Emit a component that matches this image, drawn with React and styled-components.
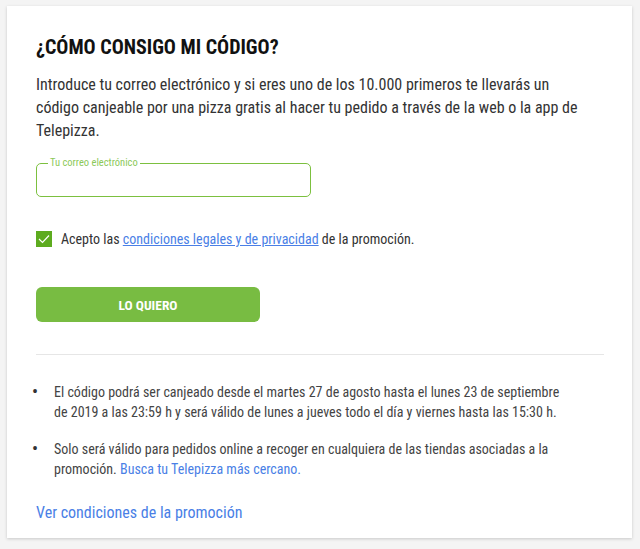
import styled, { createGlobalStyle } from "styled-components"

const Global = createGlobalStyle`
    html, body {
        margin: 0;
        padding: 0;
        background: #f4f4f4;
    }
    body {
        font-family: Roboto, "Liberation Sans", sans-serif;
        font-stretch: 75%;
        color: #333333;
    }
`

export default function App () {
    return (
        <Page>
            <Global />
            <Card>
                <Titulo>¿CÓMO CONSIGO MI CÓDIGO?</Titulo>
                <Intro>
                    Introduce tu correo electrónico y si eres uno de los 10.000 primeros te llevarás un
                    código canjeable por una pizza gratis al hacer tu pedido a través de la web o la app de
                    Telepizza.
                </Intro>
                <Campo>
                    <legend>Tu correo electrónico</legend>
                    <input type="email" />
                </Campo>
                <Acepto>
                    <Check>
                        <svg width="12" height="10" viewBox="0 0 12 10">
                            <path d="M1 5 L4.5 8.5 L11 1.5" fill="none" stroke="#ffffff" strokeWidth="1.2" />
                        </svg>
                    </Check>
                    <span>
                        Acepto las <Enlace href="#" $under>condiciones legales y de privacidad</Enlace> de la promoción.
                    </span>
                </Acepto>
                <Boton>LO QUIERO</Boton>
                <Linea />
                <Lista>
                    <li>
                        El código podrá ser canjeado desde el martes 27 de agosto hasta el lunes 23 de septiembre
                        de 2019 a las 23:59 h y será válido de lunes a jueves todo el día y viernes hasta las 15:30 h.
                    </li>
                    <li>
                        <span>
                            Solo será válido para pedidos online a recoger en cualquiera de las tiendas asociadas a la
                            promoción. <Enlace href="#">Busca tu Telepizza más cercano.</Enlace>
                        </span>
                    </li>
                </Lista>
                <VerCondiciones href="#">Ver condiciones de la promoción</VerCondiciones>
            </Card>
        </Page>
    )
}

const Page = styled.div`
    padding: 6px 8px 6px 7px;
`

const Card = styled.div`
    background: #ffffff;
    box-shadow: 0 1px 3px rgba(0, 0, 0, 0.18);
    padding: 28px 28px 16px 29px;
    display: flex;
    flex-direction: column;
`

const Titulo = styled.h2`
    margin: 0;
    font-size: 20px;
    font-weight: bold;
    color: #111111;
    line-height: 26px;
`

const Intro = styled.p`
    margin: 13px 0 0 0;
    font-size: 16px;
    line-height: 23px;
    color: #333333;
    max-width: 545px;
`

const Campo = styled.fieldset`
    margin: 16px 0 0 0;
    width: 275px;
    height: 39px;
    box-sizing: border-box;
    border: 1px solid #7cc03f;
    border-radius: 5px;
    padding: 0 10px;

    legend {
        font-size: 10.5px;
        color: #8cc95a;
        padding: 0 2px;
        margin-left: 1px;
        line-height: 10px;
    }

    input {
        border: none;
        outline: none;
        width: 100%;
        background: transparent;
    }
`

const Acepto = styled.label`
    margin-top: 34px;
    display: flex;
    align-items: center;
    gap: 9px;
    font-size: 14px;
    color: #333333;
`

const Check = styled.span`
    width: 16px;
    height: 16px;
    background: #5dab1f;
    display: flex;
    align-items: center;
    justify-content: center;
`

const Enlace = styled.a`
    color: #4a7fe6;
    text-decoration: ${props => props.$under ? "underline" : "none"};
`

const Boton = styled.button`
    margin-top: 40px;
    width: 224px;
    height: 35px;
    border: none;
    border-radius: 6px;
    background: #78bc42;
    color: #ffffff;
    font-family: inherit;
    font-stretch: 75%;
    font-weight: bold;
    font-size: 13.5px;
`

const Linea = styled.hr`
    margin: 32px 0 0 0;
    border: none;
    border-top: 1px solid #e6e6e6;
`

const Lista = styled.ul`
    margin: 27px 0 0 -4px;
    padding: 0;
    list-style: none;
    font-size: 14px;
    line-height: 20px;
    color: #444444;

    li {
        display: grid;
        grid-template-columns: 22px 1fr;
        margin-bottom: 17px;
        max-width: 542px;
    }

    li::before {
        content: "•";
        font-size: 18px;
        line-height: 20px;
        color: #333333;
    }
`

const VerCondiciones = styled.a`
    margin-top: 7px;
    font-size: 16px;
    color: #4a7fe6;
    text-decoration: none;
`
